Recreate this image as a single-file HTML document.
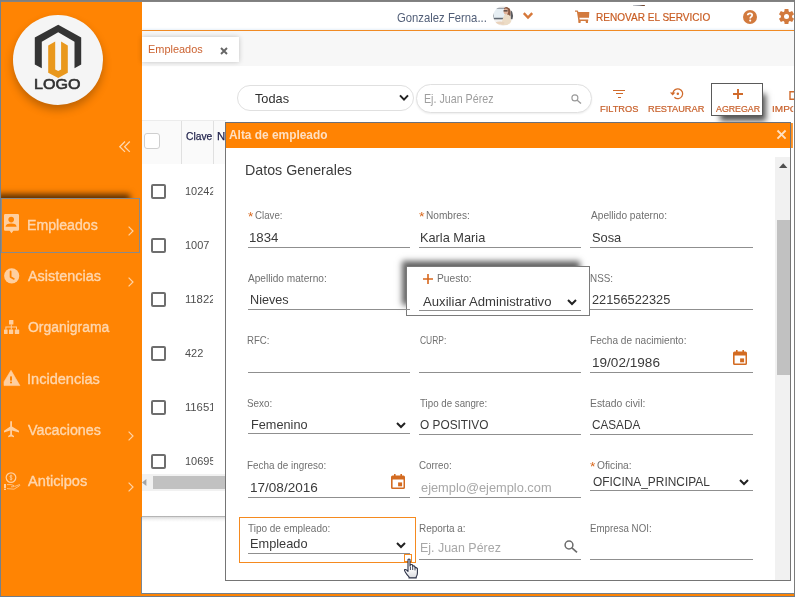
<!DOCTYPE html>
<html lang="es">
<head>
<meta charset="utf-8">
<title>Alta de empleado</title>
<style>
*{box-sizing:border-box;margin:0;padding:0}
html,body{width:795px;height:597px;overflow:hidden;background:#fff}
body{position:relative;font-family:"Liberation Sans",sans-serif;color:#333}
.a{position:absolute}
.t{position:absolute;white-space:nowrap;line-height:1;transform-origin:0 50%}
svg{position:absolute;overflow:visible}
#txt{position:absolute;left:0;top:0;width:795px;height:597px;will-change:transform}
/* frame */
#ftop{left:0;top:0;width:795px;height:2px;background:linear-gradient(#7d7d7d,#858585);z-index:50}
#fleft{left:0;top:0;width:1px;height:597px;background:#75818d;z-index:50}
#fright{left:794px;top:0;width:1px;height:597px;background:#7c7c7c;z-index:50}
#fbot{left:0;top:596px;width:795px;height:1px;background:#717c88;z-index:50}
/* sidebar */
#side{left:0;top:0;width:795px;height:597px;background:#ff8403}
#logo{left:13px;top:15px;width:90px;height:90px;border-radius:50%;background:#f5f5f5;box-shadow:0 5px 9px rgba(0,0,0,.25)}
#actbox{left:1px;top:198px;width:139px;height:55px;border:1px solid #8a8a8a;background:#ff8403;box-shadow:-7px -7px 6px -3px rgba(10,4,0,.66)}
/* content */
#content{left:141px;top:2px;width:653px;height:592px;background:#fff;border-left:1px solid #ff8403;border-bottom:1px solid #75808b}
#hdrline{left:142px;top:30px;width:652px;height:1px;background:#f08a24;box-shadow:0 -1px 2px rgba(150,190,230,.35)}
#tabbar{left:142px;top:31px;width:652px;height:35px;background:#f7f7f7}
#tab{left:142px;top:37px;width:97px;height:25px;background:#fff;box-shadow:0 0 5px rgba(0,0,0,.22)}
.pill{border:1px solid #e0e0e0;background:#fff}
/* grid */
#ghead{left:142px;top:120px;width:84px;height:44px;background:#fafafa;border-top:1px solid #ececec}
.gsep{top:121px;width:1px;height:43px;background:#e0e0e0}
#hcb{left:144px;top:133px;width:16px;height:16px;border:1px solid #cfcfcf;border-radius:3px;background:#fff}
.cb{left:151px;width:15px;height:15px;border:2px solid #6e6e6e;border-radius:2px;background:#fff}
#hscroll{left:142px;top:474px;width:84px;height:17px;background:#f1f1f1}
#hthumb{left:153px;top:476px;width:73px;height:13px;background:#c1c1c1}
#lowline{left:142px;top:516px;width:84px;height:6px;background:linear-gradient(#b2b2b2 0,#b8b8b8 17%,#dcdcdc 18%,#f4f4f4 60%,#fff 100%)}
#lowleft{left:141px;top:517px;width:1px;height:77px;background:#7b8794}
/* modal */
#modal{left:225px;top:122px;width:566px;height:459px;background:#fff;border:1px solid #757575;border-top-color:#6b7079}
#mtitle{left:226px;top:123px;width:564px;height:25px;background:#ff8303}
#vtrack{left:775px;top:157px;width:15px;height:423px;background:#f1f1f1}
#vthumb{left:777px;top:220px;width:13px;height:155px;background:#c1c1c1}
.ul{height:1px;background:#8f8f8f}
#hl1{left:406px;top:266px;width:184px;height:50px;border:1px solid #7a7a7a;background:#fff;box-shadow:-7px -8px 6px -3px rgba(0,0,0,.62)}
#hl2{left:239px;top:517px;width:177px;height:46px;border:1px solid #f58a1f;background:#fff}
#agr{left:711px;top:83px;width:52px;height:33px;border:1px solid #5a5a5a;background:#fff;box-shadow:6px 8px 6px -3px rgba(0,0,0,.68)}
</style>
</head>
<body>
<div id="side" class="a"></div>
<div id="logo" class="a"></div>
<div id="content" class="a"></div>
<div id="hdrline" class="a"></div>
<div id="tabbar" class="a"></div>
<div id="tab" class="a"></div>
<!-- sidebar: logo -->
<svg style="left:0;top:0" width="142" height="120" viewBox="0 0 142 120">
<path d="M58.2 24.7 L81.2 37.6 L81.2 64.4 L74.5 68.3 L74.5 41.8 L58.2 32.3 L41.8 41.8 L41.8 68.3 L34.8 64.4 L34.8 37.6 Z" fill="#343434"/>
<path d="M48.2 45.6 L55.2 41.4 L55.2 69.4 L58.2 71 L61.1 69.4 L61.1 41.4 L67.8 45.6 L67.8 72.8 L58.2 78 L48.2 72.8 Z" fill="#e9981d"/>
</svg>
<!-- collapse -->
<svg style="left:119.4px;top:141.4px" width="12" height="12" viewBox="0 0 12 12"><path d="M6 .5 L.8 5.7 L6 10.9 M10.8 .5 L5.6 5.7 L10.8 10.9" fill="none" stroke="#ffd6ac" stroke-width="1.3"/></svg>
<div id="actbox" class="a"></div>
<!-- menu icons -->
<svg style="left:4px;top:214px" width="16" height="20" viewBox="0 0 16 20"><path d="M1.2 0H13.8Q15 0 15 1.2V15.6Q15 16.8 13.8 16.8H9.4L7.5 19.2L5.6 16.8H1.2Q0 16.8 0 15.6V1.2Q0 0 1.2 0Z" fill="#ffcf9f"/><circle cx="7.2" cy="5.6" r="2.8" fill="#ff8403"/><path d="M1.6 12.8Q1.6 9.4 7.2 9.4Q12.6 9.4 12.6 12.8Z" fill="#ff8403"/></svg>
<svg style="left:4px;top:268px" width="16" height="16" viewBox="0 0 16 16"><circle cx="7.7" cy="7.8" r="7.6" fill="#ffcf9f"/><path d="M6.6 3.4V8.9L9.9 10.9" fill="none" stroke="#ff8403" stroke-width="1.8" stroke-linecap="round" stroke-linejoin="round"/></svg>
<svg style="left:4px;top:320px" width="16" height="15" viewBox="0 0 16 15"><g fill="#ffcf9f"><rect x="5" y="0" width="4.4" height="4.6" rx=".6"/><rect x="0" y="9.4" width="3.6" height="4.6" rx=".5"/><rect x="5" y="9.4" width="4.2" height="4.6" rx=".5"/><rect x="10.8" y="9.4" width="4.4" height="4.6" rx=".5"/><path d="M6.8 4.4h1V6.6h5.2v3h-1V7.6H7.8v2h-1v-2H2.4v2h-1v-3h5.4z"/></g></svg>
<svg style="left:4px;top:370px" width="17" height="16" viewBox="0 0 17 16"><path d="M7 .3 L15.9 15.6 H0 V11.8 Z" fill="#ffcf9f" stroke="#ffcf9f" stroke-width=".6" stroke-linejoin="round"/><rect x="6" y="6.4" width="2" height="4.2" fill="#ff8403"/><rect x="6" y="11.6" width="2" height="1.7" fill="#ff8403"/></svg>
<svg style="left:4px;top:421px" width="16" height="17" viewBox="0 0 16 17"><path d="M6.2 1Q6.2 0 7.1 0Q8 0 8 1V5.6L15 9.8V11.4L8 9.4V13.6L10 15V16.2L7.1 15.4L4.2 16.2V15L6.2 13.6V9.4L0 11.4V9.8L6.2 5.6Z" fill="#ffcf9f"/></svg>
<svg style="left:4px;top:472px" width="17" height="19" viewBox="0 0 17 19"><circle cx="7" cy="5.6" r="4.8" fill="none" stroke="#ffcf9f" stroke-width="1.25"/><path d="M8.3 4.2Q7 3.2 6 4Q5.4 5 7 5.6Q8.6 6.2 8 7.2Q7 8 5.7 7M7 2.6V8.6" fill="none" stroke="#ffcf9f" stroke-width=".8"/><rect x="0" y="12" width="2" height="4.4" fill="#ffcf9f"/><rect x="0" y="17" width="2" height="1" fill="#ffcf9f"/><path d="M3 12.6H7L10 13.6Q11 14.6 9 14.8H7M10.8 14.4L15.6 12.6Q16.4 13 15.4 13.8L10 17.2L3 16.6" fill="none" stroke="#ffcf9f" stroke-width=".8"/></svg>
<!-- menu chevrons -->
<svg style="left:128px;top:226px" width="6" height="10" viewBox="0 0 6 10"><path d="M.6 .6 L5 5 L.6 9.4" fill="none" stroke="#ffd3a6" stroke-width="1.2"/></svg>
<svg style="left:128px;top:277px" width="6" height="10" viewBox="0 0 6 10"><path d="M.6 .6 L5 5 L.6 9.4" fill="none" stroke="#ffd3a6" stroke-width="1.2"/></svg>
<svg style="left:128px;top:431px" width="6" height="10" viewBox="0 0 6 10"><path d="M.6 .6 L5 5 L.6 9.4" fill="none" stroke="#ffd3a6" stroke-width="1.2"/></svg>
<svg style="left:128px;top:482px" width="6" height="10" viewBox="0 0 6 10"><path d="M.6 .6 L5 5 L.6 9.4" fill="none" stroke="#ffd3a6" stroke-width="1.2"/></svg>

<!-- header: avatar, chevron, cart, help, gear -->
<svg style="left:493px;top:6px" width="20" height="20" viewBox="0 0 20 20"><defs><clipPath id="av"><circle cx="10.2" cy="10" r="9.9"/></clipPath><filter id="avb"><feGaussianBlur stdDeviation=".45"/></filter></defs><g clip-path="url(#av)"><g filter="url(#avb)"><rect x="-1" y="-1" width="22" height="22" fill="#f3f1ef"/><rect x="0" y="1.8" width="13" height="11" fill="#7d8690"/><rect x="1" y="2.7" width="11.6" height="9" fill="#e6eef3"/><rect x="0" y="12.2" width="12" height="1.1" fill="#555d67"/><rect x="17.6" y="4.6" width="2.6" height="8.6" fill="#5a5a5e"/><path d="M11 2.2Q13.6 -.4 16.6 2.2Q18 5 17.2 10L14 9Z" fill="#8b5a42"/><ellipse cx="12.9" cy="5.4" rx="2.3" ry="2.9" fill="#e2b49b"/><rect x="10.6" y="4.2" width="4" height="1.3" fill="#4a3c38"/><path d="M11.6 8.4Q15 7.4 17.4 10.4L18.4 19H8.2Q9.6 12 11.6 8.4Z" fill="#ecdcc6"/><path d="M2 16.4Q7 14.6 11.4 16.2L11 18.6H3Z" fill="#e9d3bd"/></g></g></svg>
<svg style="left:523px;top:12px" width="10" height="8" viewBox="0 0 10 8"><path d="M.8 1.2 L5 5.6 L9.2 1.2" fill="none" stroke="#d6783a" stroke-width="2.4"/></svg>
<div class="a" style="left:633px;top:5px;width:12px;height:1px;background:linear-gradient(90deg,#c9ccd2,#8d9098 55%,#6b3b22 85%,#8a6a5a)"></div>
<svg style="left:575px;top:10px" width="15" height="14" viewBox="0 0 15 14"><path d="M0 .4H2.4Q3 .4 3.1 1L3.3 2H14.3L14 7.8H4.4L4.7 9.6H13.2V11H3.4L1.9 1.7H0Z" fill="#d27a3e"/><rect x="3.4" y="10.6" width="2.2" height="2.5" rx=".7" fill="#d27a3e"/><rect x="10.8" y="10.6" width="2.2" height="2.5" rx=".7" fill="#d27a3e"/></svg>
<svg style="left:743px;top:10px" width="14" height="14" viewBox="0 0 14 14"><circle cx="7" cy="7" r="7" fill="#d27a3e"/><path d="M4.7 5.3Q4.8 3.3 7 3.3Q9.2 3.3 9.2 5.1Q9.2 6.2 8 6.9Q7.2 7.4 7.2 8.4" fill="none" stroke="#fff" stroke-width="1.7"/><circle cx="7.2" cy="10.6" r="1.05" fill="#fff"/></svg>
<svg style="left:779px;top:9px" width="15" height="15" viewBox="0 0 15 15"><g transform="translate(7.5 7.5)" fill="#d27a3e"><circle r="5.6"/><path d="M-2.3 -4 L-1.9 -7.6 H1.9 L2.3 -4Z"/><path d="M-2.3 -4 L-1.9 -7.6 H1.9 L2.3 -4Z" transform="rotate(60)"/><path d="M-2.3 -4 L-1.9 -7.6 H1.9 L2.3 -4Z" transform="rotate(120)"/><path d="M-2.3 -4 L-1.9 -7.6 H1.9 L2.3 -4Z" transform="rotate(180)"/><path d="M-2.3 -4 L-1.9 -7.6 H1.9 L2.3 -4Z" transform="rotate(240)"/><path d="M-2.3 -4 L-1.9 -7.6 H1.9 L2.3 -4Z" transform="rotate(300)"/><circle r="2.5" fill="#fff"/></g></svg>
<!-- tab close -->
<svg style="left:220px;top:47.4px" width="8" height="8" viewBox="0 0 8 8"><path d="M1 1L7 7M7 1L1 7" stroke="#666" stroke-width="1.9"/></svg>

<!-- toolbar -->
<div class="a pill" style="left:237px;top:85px;width:177px;height:26px;border-radius:13px"></div>
<svg style="left:399px;top:94px" width="10" height="8" viewBox="0 0 10 8"><path d="M1 1.4 L5 5.6 L9 1.4" fill="none" stroke="#222" stroke-width="2"/></svg>
<div class="a pill" style="left:416px;top:84px;width:176px;height:29px;border-radius:14.5px;box-shadow:0 1px 2px rgba(0,0,0,.07)"></div>
<svg style="left:571px;top:94px" width="11" height="10" viewBox="0 0 11 10"><circle cx="3.9" cy="3.9" r="3" fill="none" stroke="#999" stroke-width="1.1"/><path d="M6.2 6.2L10 9.6" stroke="#999" stroke-width="1.3"/></svg>
<!-- filter icon -->
<div class="a" style="left:613px;top:89.8px;width:12.4px;height:1.2px;background:#d06a2a"></div>
<div class="a" style="left:616.2px;top:93.3px;width:6.4px;height:1.2px;background:#d06a2a"></div>
<div class="a" style="left:618px;top:96.7px;width:2.8px;height:1.2px;background:#d06a2a"></div>
<!-- restore icon -->
<svg style="left:669px;top:87px" width="16" height="14" viewBox="0 0 16 14"><path d="M3.9 6.2A4.9 4.9 0 1 1 5.4 10.3" fill="none" stroke="#d06a2a" stroke-width="1.3"/><path d="M.9 5.6H6.4L3.7 8.6Z" fill="#d06a2a"/><circle cx="8.8" cy="6.8" r="1.25" fill="#d06a2a"/></svg>
<div id="agr" class="a"></div>
<svg style="left:733px;top:89px" width="10" height="10" viewBox="0 0 10 10"><path d="M5 0V10M0 5H10" stroke="#d06a2a" stroke-width="1.9"/></svg>
<svg style="left:789px;top:91px" width="6" height="9" viewBox="0 0 6 9"><path d="M6 .7H1V8.3H6" fill="none" stroke="#d06a2a" stroke-width="1.4"/></svg>

<!-- grid -->
<div id="ghead" class="a"></div>
<div class="a gsep" style="left:181px"></div><div class="a gsep" style="left:213px"></div>
<div id="hcb" class="a"></div>
<div class="a cb" style="top:184px"></div><div class="a cb" style="top:238px"></div><div class="a cb" style="top:292px"></div>
<div class="a cb" style="top:346px"></div><div class="a cb" style="top:400px"></div><div class="a cb" style="top:454px"></div>
<div id="hscroll" class="a"></div><div id="hthumb" class="a"></div>
<svg style="left:142px;top:479px" width="5" height="7" viewBox="0 0 5 7"><path d="M4.4 0V7L0 3.5Z" fill="#a3a3a3"/></svg>
<div id="lowline" class="a"></div><div id="lowleft" class="a"></div>

<!-- modal -->
<div id="modal" class="a"></div>
<div id="mtitle" class="a"></div>
<div class="a" style="left:791px;top:123px;width:2px;height:25px;background:linear-gradient(90deg,#ff8a14,#ffa040)"></div><svg style="left:777px;top:130px" width="9" height="9" viewBox="0 0 9 9"><path d="M.5 .5L8.6 8.6M8.6 .5L.5 8.6" stroke="#ffe0c2" stroke-width="1.9"/></svg>
<div id="vtrack" class="a"></div><div id="vthumb" class="a"></div>
<svg style="left:779px;top:163px" width="9" height="5" viewBox="0 0 9 5"><path d="M0 5H8.4L4.2 .2Z" fill="#505050"/></svg>
<div id="hl1" class="a"></div>
<div id="hl2" class="a"></div>
<div class="a ul" style="left:248px;top:247px;width:162px"></div>
<div class="a ul" style="left:419px;top:247px;width:162px"></div>
<div class="a ul" style="left:590px;top:247px;width:163px"></div>
<div class="a ul" style="left:248px;top:309px;width:162px"></div>
<div class="a ul" style="left:419px;top:310px;width:162px"></div>
<div class="a ul" style="left:590px;top:309px;width:163px"></div>
<div class="a ul" style="left:248px;top:372px;width:162px"></div>
<div class="a ul" style="left:419px;top:372px;width:162px"></div>
<div class="a ul" style="left:590px;top:372px;width:163px"></div>
<div class="a ul" style="left:248px;top:433px;width:162px"></div>
<div class="a ul" style="left:419px;top:434px;width:162px"></div>
<div class="a ul" style="left:590px;top:434px;width:163px"></div>
<div class="a ul" style="left:248px;top:497px;width:162px"></div>
<div class="a ul" style="left:419px;top:497px;width:162px"></div>
<div class="a ul" style="left:590px;top:490px;width:163px"></div>
<div class="a ul" style="left:248px;top:553px;width:162px"></div>
<div class="a ul" style="left:419px;top:559px;width:162px"></div>
<div class="a ul" style="left:590px;top:559px;width:163px"></div>
<svg style="left:567px;top:299px" width="10" height="7" viewBox="0 0 10 7"><path d="M1 1 L5 5 L9 1" fill="none" stroke="#222" stroke-width="2"/></svg>
<svg style="left:396px;top:422px" width="10" height="7" viewBox="0 0 10 7"><path d="M1 1 L5 5 L9 1" fill="none" stroke="#222" stroke-width="2"/></svg>
<svg style="left:739px;top:479px" width="10" height="7" viewBox="0 0 10 7"><path d="M1 1 L5 5 L9 1" fill="none" stroke="#222" stroke-width="2"/></svg>
<svg style="left:396px;top:542px" width="10" height="7" viewBox="0 0 10 7"><path d="M1 1 L5 5 L9 1" fill="none" stroke="#222" stroke-width="2"/></svg>
<svg style="left:732.9px;top:349.6px" width="14" height="15" viewBox="0 0 14 15"><path d="M3 0H4.6V1.4H9.4V0H11V1.4H12.4Q14 1.4 14 3V13.4Q14 15 12.4 15H1.6Q0 15 0 13.4V3Q0 1.4 1.6 1.4H3Z M1.6 5.4V13.4H12.5V5.4Z" fill="#d36b21" fill-rule="evenodd"/><rect x="7.1" y="8.4" width="4" height="3.9" fill="#d36b21"/></svg>
<svg style="left:390.6px;top:473.8px" width="14" height="15" viewBox="0 0 14 15"><path d="M3 0H4.6V1.4H9.4V0H11V1.4H12.4Q14 1.4 14 3V13.4Q14 15 12.4 15H1.6Q0 15 0 13.4V3Q0 1.4 1.6 1.4H3Z M1.6 5.4V13.4H12.5V5.4Z" fill="#d36b21" fill-rule="evenodd"/><rect x="7.1" y="8.4" width="4" height="3.9" fill="#d36b21"/></svg>
<svg style="left:423px;top:274px" width="10" height="10" viewBox="0 0 10 10"><path d="M5 0V10M0 5H10" stroke="#d8671c" stroke-width="1.6"/></svg>
<svg style="left:564px;top:540px" width="14" height="13" viewBox="0 0 14 13"><circle cx="5" cy="5" r="3.9" fill="none" stroke="#6b6b6b" stroke-width="1.5"/><path d="M7.9 7.9L13 12.4" stroke="#6b6b6b" stroke-width="1.7"/></svg>
<div class="a" style="left:404px;top:554px;width:8px;height:8px;border:1.5px solid #f58a1f;background:#fff"></div>
<svg style="left:403px;top:558px" width="16" height="21" viewBox="0 0 16 21"><defs><linearGradient id="hg" x1="0" y1="0" x2="0" y2="1"><stop offset=".5" stop-color="#fff"/><stop offset="1" stop-color="#d9dade"/></linearGradient></defs><path d="M5 1.6Q6 .4 7 1.6V8L7.4 6.8Q8.6 6 9.6 7V8.4Q10.8 7.4 12 8.6V9.8Q13.4 9.2 14.4 10.6V15Q14.4 17.4 13.2 18.8V19.9H6V18.8Q4 17 2.4 14.2Q1 12 1.8 11.6Q3.2 11 5 13.4Z" fill="url(#hg)" stroke="#2b3147" stroke-width="1.1" stroke-linejoin="round"/><path d="M7.4 8.6V12M9.7 9V12M12 9.8V12.4" stroke="#2b3147" stroke-width=".9" fill="none"/></svg>

<div id="txt">
<div class="t" style="left:34.24px;top:78px;font-size:13.8px;color:#333;transform:scaleX(1.1635);-webkit-text-stroke:.6px #333;">LOGO</div>
<div class="t" style="left:27.42px;top:217px;font-size:15.4px;color:#ffd6ad;transform:scaleX(0.9192);-webkit-text-stroke:.4px #ffd6ad;">Empleados</div>
<div class="t" style="left:28.20px;top:268px;font-size:15.4px;color:#ffd6ad;transform:scaleX(0.9365);-webkit-text-stroke:.4px #ffd6ad;">Asistencias</div>
<div class="t" style="left:28.00px;top:319px;font-size:15.4px;color:#ffd6ad;transform:scaleX(0.9045);-webkit-text-stroke:.4px #ffd6ad;">Organigrama</div>
<div class="t" style="left:27.39px;top:371px;font-size:15.4px;color:#ffd6ad;transform:scaleX(0.9456);-webkit-text-stroke:.4px #ffd6ad;">Incidencias</div>
<div class="t" style="left:28.20px;top:422px;font-size:15.4px;color:#ffd6ad;transform:scaleX(0.9295);-webkit-text-stroke:.4px #ffd6ad;">Vacaciones</div>
<div class="t" style="left:28.20px;top:473px;font-size:15.4px;color:#ffd6ad;transform:scaleX(0.9496);-webkit-text-stroke:.4px #ffd6ad;">Anticipos</div>
<div class="t" style="left:396.59px;top:11px;font-size:13.3px;color:#525f78;transform:scaleX(0.8498);">Gonzalez Ferna...</div>
<div class="t" style="left:596.13px;top:12px;font-size:11.3px;color:#c85c22;transform:scaleX(0.8887);-webkit-text-stroke:.2px #c85c22;">RENOVAR EL SERVICIO</div>
<div class="t" style="left:147.71px;top:44px;font-size:11.3px;color:#cc6230;transform:scaleX(0.9678);">Empleados</div>
<div class="t" style="left:255.20px;top:92px;font-size:13.4px;color:#2e2e2e;transform:scaleX(0.9515);">Todas</div>
<div class="t" style="left:423.78px;top:93px;font-size:12.4px;color:#9e9e9e;transform:scaleX(0.8621);">Ej. Juan Pérez</div>
<div class="t" style="left:599.56px;top:105px;font-size:9px;color:#c8612c;transform:scaleX(1.0297);-webkit-text-stroke:.2px #c8612c;">FILTROS</div>
<div class="t" style="left:647.99px;top:105px;font-size:9px;color:#c8612c;transform:scaleX(1.0287);-webkit-text-stroke:.2px #c8612c;">RESTAURAR</div>
<div class="t" style="left:716.20px;top:105px;font-size:9px;color:#c8612c;transform:scaleX(0.9798);-webkit-text-stroke:.2px #c8612c;">AGREGAR</div>
<div class="t" style="left:772.30px;top:105px;font-size:9px;color:#c8612c;transform:scaleX(1.1142);width:18.8px;overflow:hidden;-webkit-text-stroke:.2px #c8612c;">IMPORTAR</div>
<div class="t" style="left:185.70px;top:131px;font-size:11.3px;color:#24264f;transform:scaleX(0.9106);-webkit-text-stroke:.25px #24264f;">Clave</div>
<div class="t" style="left:217.21px;top:131px;font-size:11.3px;color:#24264f;transform:scaleX(1.0077);-webkit-text-stroke:.25px #24264f;">N</div>
<div class="t" style="left:184.90px;top:186px;font-size:11.3px;color:#4e4e4e;transform:scaleX(0.9709);width:29.1px;overflow:hidden;">10242</div>
<div class="t" style="left:184.90px;top:240px;font-size:11.3px;color:#4e4e4e;transform:scaleX(0.9709);width:29.1px;overflow:hidden;">1007</div>
<div class="t" style="left:184.90px;top:294px;font-size:11.3px;color:#4e4e4e;width:28.4px;overflow:hidden;">11822</div>
<div class="t" style="left:184.90px;top:348px;font-size:11.3px;color:#4e4e4e;transform:scaleX(0.9709);width:29.1px;overflow:hidden;">422</div>
<div class="t" style="left:184.90px;top:402px;font-size:11.3px;color:#4e4e4e;width:28.4px;overflow:hidden;">11651</div>
<div class="t" style="left:184.90px;top:456px;font-size:11.3px;color:#4e4e4e;transform:scaleX(0.9709);width:29.1px;overflow:hidden;">10695</div>
<div class="t" style="left:229.00px;top:129px;font-size:12.9px;color:#ffe0c2;font-weight:700;transform:scaleX(0.9231);">Alta de empleado</div>
<div class="t" style="left:244.98px;top:163px;font-size:14.4px;color:#3c3c3c;transform:scaleX(0.9907);">Datos Generales</div>
<div class="t" style="left:247.59px;top:211px;font-size:12.5px;color:#d8671c;transform:scaleX(1.0852);">*</div>
<div class="t" style="left:255.07px;top:211px;font-size:10.3px;color:#707070;transform:scaleX(0.9438);">Clave:</div>
<div class="t" style="left:249.00px;top:231px;font-size:13.4px;color:#3a3a3a;transform:scaleX(0.9873);">1834</div>
<div class="t" style="left:418.97px;top:211px;font-size:12.5px;color:#d8671c;transform:scaleX(1.1352);">*</div>
<div class="t" style="left:426.38px;top:211px;font-size:10.3px;color:#707070;transform:scaleX(0.9823);">Nombres:</div>
<div class="t" style="left:419.89px;top:231px;font-size:13.4px;color:#3a3a3a;transform:scaleX(0.9536);">Karla Maria</div>
<div class="t" style="left:590.60px;top:211px;font-size:10.3px;color:#707070;transform:scaleX(0.9840);">Apellido paterno:</div>
<div class="t" style="left:591.99px;top:231px;font-size:13.4px;color:#3a3a3a;transform:scaleX(0.9588);">Sosa</div>
<div class="t" style="left:247.90px;top:274px;font-size:10.3px;color:#707070;transform:scaleX(0.9825);">Apellido materno:</div>
<div class="t" style="left:249.95px;top:293px;font-size:13.4px;color:#3a3a3a;transform:scaleX(0.9449);">Nieves</div>
<div class="t" style="left:436.55px;top:274px;font-size:10.3px;color:#707070;transform:scaleX(0.9923);">Puesto:</div>
<div class="t" style="left:423.00px;top:295px;font-size:13.4px;color:#3a3a3a;transform:scaleX(0.9808);">Auxiliar Administrativo</div>
<div class="t" style="left:589.68px;top:274px;font-size:10.3px;color:#707070;transform:scaleX(0.9592);">NSS:</div>
<div class="t" style="left:592.41px;top:293px;font-size:13.4px;color:#3a3a3a;transform:scaleX(0.9560);">22156522325</div>
<div class="t" style="left:247.35px;top:336px;font-size:10.3px;color:#707070;transform:scaleX(0.9358);">RFC:</div>
<div class="t" style="left:419.56px;top:336px;font-size:10.3px;color:#707070;transform:scaleX(0.8211);">CURP:</div>
<div class="t" style="left:589.77px;top:336px;font-size:10.3px;color:#707070;transform:scaleX(0.9806);">Fecha de nacimiento:</div>
<div class="t" style="left:592.48px;top:356px;font-size:13.4px;color:#3a3a3a;transform:scaleX(1.0136);">19/02/1986</div>
<div class="t" style="left:247.49px;top:399px;font-size:10.3px;color:#707070;transform:scaleX(0.9595);">Sexo:</div>
<div class="t" style="left:250.98px;top:418px;font-size:13.4px;color:#3a3a3a;transform:scaleX(0.9495);">Femenino</div>
<div class="t" style="left:420.20px;top:399px;font-size:10.3px;color:#707070;transform:scaleX(0.9443);">Tipo de sangre:</div>
<div class="t" style="left:420.20px;top:418px;font-size:13.4px;color:#3a3a3a;transform:scaleX(0.8852);">O POSITIVO</div>
<div class="t" style="left:589.75px;top:399px;font-size:10.3px;color:#707070;transform:scaleX(1.0069);">Estado civil:</div>
<div class="t" style="left:591.56px;top:418px;font-size:13.4px;color:#3a3a3a;transform:scaleX(0.8759);">CASADA</div>
<div class="t" style="left:247.26px;top:461px;font-size:10.3px;color:#707070;transform:scaleX(0.9608);">Fecha de ingreso:</div>
<div class="t" style="left:249.96px;top:481px;font-size:13.4px;color:#3a3a3a;transform:scaleX(1.0119);">17/08/2016</div>
<div class="t" style="left:418.65px;top:461px;font-size:10.3px;color:#707070;transform:scaleX(0.9534);">Correo:</div>
<div class="t" style="left:421.03px;top:481px;font-size:13.4px;color:#a8a8a8;transform:scaleX(0.9573);">ejemplo@ejemplo.com</div>
<div class="t" style="left:590.10px;top:461px;font-size:12.5px;color:#d8671c;transform:scaleX(1.1047);">*</div>
<div class="t" style="left:597.40px;top:461px;font-size:10.3px;color:#707070;transform:scaleX(0.9919);">Oficina:</div>
<div class="t" style="left:592.99px;top:475px;font-size:13.4px;color:#3a3a3a;transform:scaleX(0.8885);">OFICINA_PRINCIPAL</div>
<div class="t" style="left:248.20px;top:524px;font-size:10.3px;color:#707070;transform:scaleX(0.9690);">Tipo de empleado:</div>
<div class="t" style="left:249.98px;top:537px;font-size:13.4px;color:#3a3a3a;transform:scaleX(0.9541);">Empleado</div>
<div class="t" style="left:419.15px;top:524px;font-size:10.3px;color:#707070;transform:scaleX(0.9697);">Reporta a:</div>
<div class="t" style="left:419.89px;top:541px;font-size:13.4px;color:#a8a8a8;transform:scaleX(0.9283);">Ej. Juan Pérez</div>
<div class="t" style="left:589.80px;top:524px;font-size:10.3px;color:#707070;transform:scaleX(0.9443);">Empresa NOI:</div>
</div>
<div id="ftop" class="a"></div><div id="fleft" class="a"></div><div id="fright" class="a"></div><div id="fbot" class="a"></div>
</body>
</html>
